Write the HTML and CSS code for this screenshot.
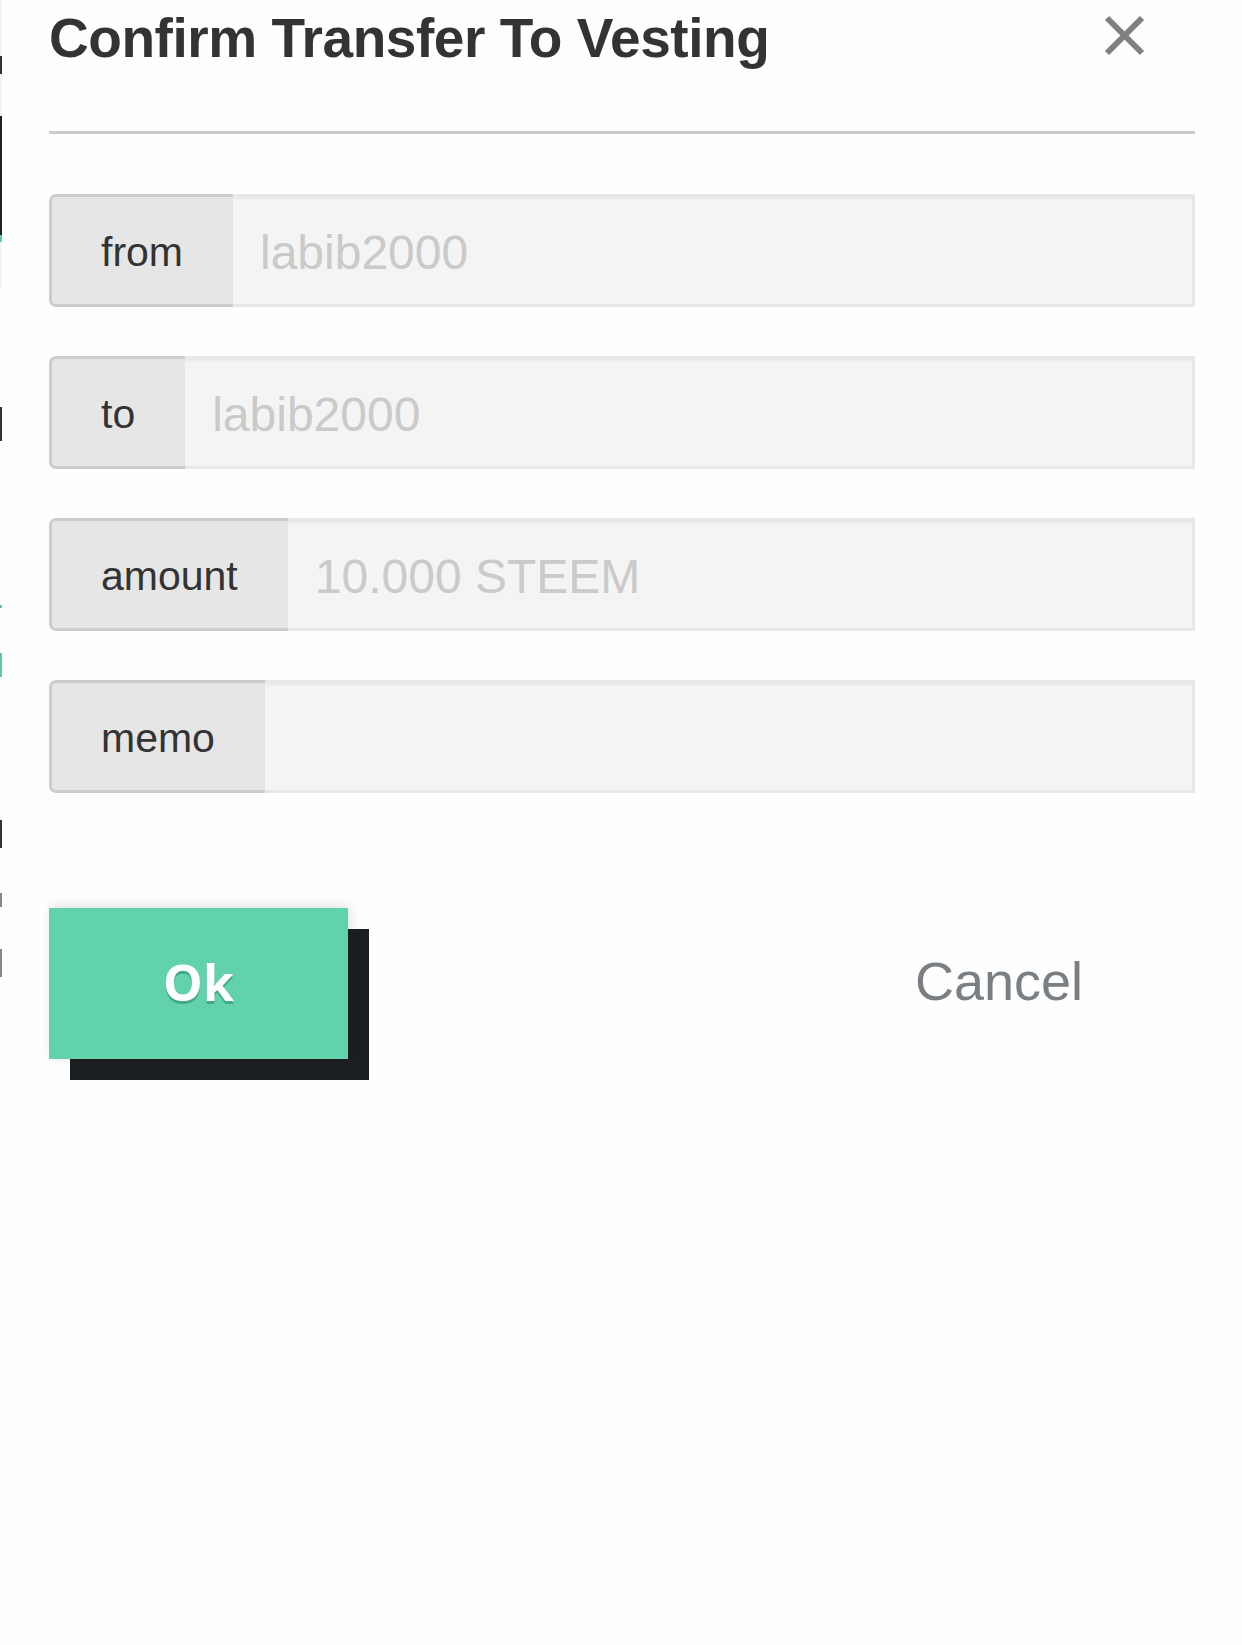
FILE: index.html
```html
<!DOCTYPE html>
<html lang="en">
<head>
  <meta charset="UTF-8" />
  <meta name="viewport" content="width=device-width, initial-scale=1.0" />
  <title>Confirm Transfer To Vesting</title>
  <link rel="stylesheet" href="styles.css">
</head>
<body>
  <!-- sliver of the page behind the modal -->
  <div class="edge"></div>

  <div class="modal">
    <div class="modal-head">
      <h1>Confirm Transfer To Vesting</h1>
      <button class="close" aria-label="Close">
        <svg width="41" height="41" viewBox="0 0 41 41">
          <path d="M3 3 L38 38 M38 3 L3 38" stroke="#808080" stroke-width="6" fill="none" />
        </svg>
      </button>
    </div>

    <div class="field">
      <span class="label">from</span>
      <input type="text" placeholder="labib2000" />
    </div>
    <div class="field">
      <span class="label">to</span>
      <input type="text" placeholder="labib2000" />
    </div>
    <div class="field">
      <span class="label">amount</span>
      <input type="text" placeholder="10.000 STEEM" />
    </div>
    <div class="field">
      <span class="label">memo</span>
      <input type="text" />
    </div>

    <div class="actions">
      <div class="ok-wrap">
        <button class="ok">Ok</button>
      </div>
      <button class="cancel">Cancel</button>
    </div>
  </div>
</body>
</html>
```

FILE: styles.css
```css
body {
  margin: 0;
  background: #fefefe;
  color: #333;
  font-family: "Liberation Sans", Arial, sans-serif;
}
.edge {
  position: absolute;
  left: 0;
  top: 0;
  width: 2px;
  height: 1645px;
  background: linear-gradient(#f4f4f0 0 56px, #333 56px 74px, #f4f4f0 74px 116px,
    #222 116px 235px, #5cc9a4 235px 242px, #f4f4f0 242px 288px, #fefefe 288px 407px,
    #333 407px 441px, #fefefe 441px 605px, #5cc9a4 605px 608px, #fefefe 608px 653px,
    #5cc9a4 653px 677px, #fefefe 677px 820px, #333 820px 848px, #fefefe 848px 893px,
    #888 893px 907px, #fefefe 907px 949px, #888 949px 977px, #fefefe 977px);
}
.modal {
  padding: 0 47px 0 49px;
}
.modal-head {
  display: flex;
  justify-content: space-between;
  align-items: flex-start;
  height: 131px;
  border-bottom: 3px solid #cccccc;
}
.modal-head h1 {
  margin: 0;
  font-size: 55px;
  line-height: 76px;
  font-weight: bold;
  letter-spacing: -0.45px;
  color: #333;
}
.close {
  margin: 15px 50px 0 0;
  padding: 0;
  border: none;
  background: none;
  line-height: 0;
}
.field {
  display: flex;
  height: 113px;
  margin-top: 49px;
}
.modal-head + .field {
  margin-top: 60px;
}
.label {
  display: flex;
  align-items: center;
  padding: 4px 50px 0 49px;
  background: #e6e6e6;
  border: 3px solid #cccccc;
  border-right: none;
  border-radius: 7px 0 0 7px;
  font-size: 41px;
  color: #333;
}
.field input {
  flex: 1;
  min-width: 0;
  margin: 0;
  padding: 4px 27px 0;
  background: #f4f4f4;
  border: 3px solid #e8e8e8;
  border-left: none;
  border-radius: 0;
  box-shadow: inset 0 4px 3px -2px rgba(0, 0, 0, 0.05);
  font-family: "Liberation Sans", Arial, sans-serif;
  font-size: 48px;
  color: #333;
  outline: none;
}
.field input::placeholder {
  color: #cacaca;
}
.actions {
  display: flex;
  justify-content: space-between;
  align-items: center;
  margin-top: 115px;
  padding-right: 112px;
}
.ok-wrap {
  position: relative;
  padding: 0 21px 21px 0;
}
.ok-wrap::before {
  content: "";
  position: absolute;
  left: 21px;
  top: 21px;
  right: 0;
  bottom: 0;
  background: #1b1f22;
}
.ok {
  position: relative;
  display: block;
  width: 299px;
  height: 151px;
  padding: 0 0 4px;
  border: none;
  background: #62d2ab;
  color: #fff;
  font-family: "Open Sans", "Liberation Sans", sans-serif;
  font-weight: bold;
  font-size: 50px;
  text-shadow: 0 3px 0 rgba(30, 120, 90, 0.45);
  box-shadow: 2px -2px 10px rgba(0, 0, 0, 0.12);
}
.cancel {
  margin-bottom: 27px;
  padding: 0;
  border: none;
  background: none;
  font-family: "Liberation Sans", Arial, sans-serif;
  font-size: 54px;
  color: #7a7f84;
}
```
